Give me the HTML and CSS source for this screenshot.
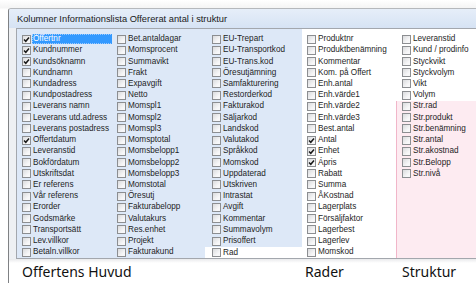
FILE: index.html
```html
<!DOCTYPE html>
<html lang="sv">
<head>
<meta charset="utf-8">
<title>Kolumner Informationslista</title>
<link rel="stylesheet" href="styles.css">
</head>
<body>
<div class="window">
  <div class="titlebar">Kolumner Informationslista Offererat antal i struktur</div>
  <div class="listbox">
    <div class="col huvud">
      <div class="item"><span class="cb on"><svg viewBox="0 0 7 7"><path d="M1 3.4 L2.8 5.3 L6 1.4"/></svg></span><span class="lbl sel">Offertnr</span></div>
      <div class="item"><span class="cb on"><svg viewBox="0 0 7 7"><path d="M1 3.4 L2.8 5.3 L6 1.4"/></svg></span><span class="lbl">Kundnummer</span></div>
      <div class="item"><span class="cb on"><svg viewBox="0 0 7 7"><path d="M1 3.4 L2.8 5.3 L6 1.4"/></svg></span><span class="lbl">Kundsöknamn</span></div>
      <div class="item"><span class="cb"></span><span class="lbl">Kundnamn</span></div>
      <div class="item"><span class="cb"></span><span class="lbl">Kundadress</span></div>
      <div class="item"><span class="cb"></span><span class="lbl">Kundpostadress</span></div>
      <div class="item"><span class="cb"></span><span class="lbl">Leverans namn</span></div>
      <div class="item"><span class="cb"></span><span class="lbl">Leverans utd.adress</span></div>
      <div class="item"><span class="cb"></span><span class="lbl">Leverans postadress</span></div>
      <div class="item"><span class="cb on"><svg viewBox="0 0 7 7"><path d="M1 3.4 L2.8 5.3 L6 1.4"/></svg></span><span class="lbl">Offertdatum</span></div>
      <div class="item"><span class="cb"></span><span class="lbl">Leveranstid</span></div>
      <div class="item"><span class="cb"></span><span class="lbl">Bokfördatum</span></div>
      <div class="item"><span class="cb"></span><span class="lbl">Utskriftsdat</span></div>
      <div class="item"><span class="cb"></span><span class="lbl">Er referens</span></div>
      <div class="item"><span class="cb"></span><span class="lbl">Vår referens</span></div>
      <div class="item"><span class="cb"></span><span class="lbl">Erorder</span></div>
      <div class="item"><span class="cb"></span><span class="lbl">Godsmärke</span></div>
      <div class="item"><span class="cb"></span><span class="lbl">Transportsätt</span></div>
      <div class="item"><span class="cb"></span><span class="lbl">Lev.villkor</span></div>
      <div class="item"><span class="cb"></span><span class="lbl">Betaln.villkor</span></div>
    </div>
    <div class="col huvud">
      <div class="item"><span class="cb"></span><span class="lbl">Bet.antaldagar</span></div>
      <div class="item"><span class="cb"></span><span class="lbl">Momsprocent</span></div>
      <div class="item"><span class="cb"></span><span class="lbl">Summavikt</span></div>
      <div class="item"><span class="cb"></span><span class="lbl">Frakt</span></div>
      <div class="item"><span class="cb"></span><span class="lbl">Expavgift</span></div>
      <div class="item"><span class="cb"></span><span class="lbl">Netto</span></div>
      <div class="item"><span class="cb"></span><span class="lbl">Momspl1</span></div>
      <div class="item"><span class="cb"></span><span class="lbl">Momspl2</span></div>
      <div class="item"><span class="cb"></span><span class="lbl">Momspl3</span></div>
      <div class="item"><span class="cb"></span><span class="lbl">Momsptotal</span></div>
      <div class="item"><span class="cb"></span><span class="lbl">Momsbelopp1</span></div>
      <div class="item"><span class="cb"></span><span class="lbl">Momsbelopp2</span></div>
      <div class="item"><span class="cb"></span><span class="lbl">Momsbelopp3</span></div>
      <div class="item"><span class="cb"></span><span class="lbl">Momstotal</span></div>
      <div class="item"><span class="cb"></span><span class="lbl">Öresutj</span></div>
      <div class="item"><span class="cb"></span><span class="lbl">Fakturabelopp</span></div>
      <div class="item"><span class="cb"></span><span class="lbl">Valutakurs</span></div>
      <div class="item"><span class="cb"></span><span class="lbl">Res.enhet</span></div>
      <div class="item"><span class="cb"></span><span class="lbl">Projekt</span></div>
      <div class="item"><span class="cb"></span><span class="lbl">Fakturakund</span></div>
    </div>
    <div class="col huvud">
      <div class="item"><span class="cb"></span><span class="lbl">EU-Trepart</span></div>
      <div class="item"><span class="cb"></span><span class="lbl">EU-Transportkod</span></div>
      <div class="item"><span class="cb"></span><span class="lbl">EU-Trans.kod</span></div>
      <div class="item"><span class="cb"></span><span class="lbl">Öresutjämning</span></div>
      <div class="item"><span class="cb"></span><span class="lbl">Samfakturering</span></div>
      <div class="item"><span class="cb"></span><span class="lbl">Restorderkod</span></div>
      <div class="item"><span class="cb"></span><span class="lbl">Fakturakod</span></div>
      <div class="item"><span class="cb"></span><span class="lbl">Säljarkod</span></div>
      <div class="item"><span class="cb"></span><span class="lbl">Landskod</span></div>
      <div class="item"><span class="cb"></span><span class="lbl">Valutakod</span></div>
      <div class="item"><span class="cb"></span><span class="lbl">Språkkod</span></div>
      <div class="item"><span class="cb"></span><span class="lbl">Momskod</span></div>
      <div class="item"><span class="cb"></span><span class="lbl">Uppdaterad</span></div>
      <div class="item"><span class="cb"></span><span class="lbl">Utskriven</span></div>
      <div class="item"><span class="cb"></span><span class="lbl">Intrastat</span></div>
      <div class="item"><span class="cb"></span><span class="lbl">Avgift</span></div>
      <div class="item"><span class="cb"></span><span class="lbl">Kommentar</span></div>
      <div class="item"><span class="cb"></span><span class="lbl">Summavolym</span></div>
      <div class="item"><span class="cb"></span><span class="lbl">Prisoffert</span></div>
      <div class="item plain"><span class="cb"></span><span class="lbl">Rad</span></div>
    </div>
    <div class="col">
      <div class="item"><span class="cb"></span><span class="lbl">Produktnr</span></div>
      <div class="item"><span class="cb"></span><span class="lbl">Produktbenämning</span></div>
      <div class="item"><span class="cb"></span><span class="lbl">Kommentar</span></div>
      <div class="item"><span class="cb"></span><span class="lbl">Kom. på Offert</span></div>
      <div class="item"><span class="cb"></span><span class="lbl">Enh.antal</span></div>
      <div class="item"><span class="cb"></span><span class="lbl">Enh.värde1</span></div>
      <div class="item"><span class="cb"></span><span class="lbl">Enh.värde2</span></div>
      <div class="item"><span class="cb"></span><span class="lbl">Enh.värde3</span></div>
      <div class="item"><span class="cb"></span><span class="lbl">Best.antal</span></div>
      <div class="item"><span class="cb on"><svg viewBox="0 0 7 7"><path d="M1 3.4 L2.8 5.3 L6 1.4"/></svg></span><span class="lbl">Antal</span></div>
      <div class="item"><span class="cb on"><svg viewBox="0 0 7 7"><path d="M1 3.4 L2.8 5.3 L6 1.4"/></svg></span><span class="lbl">Enhet</span></div>
      <div class="item"><span class="cb on"><svg viewBox="0 0 7 7"><path d="M1 3.4 L2.8 5.3 L6 1.4"/></svg></span><span class="lbl">Ápris</span></div>
      <div class="item"><span class="cb"></span><span class="lbl">Rabatt</span></div>
      <div class="item"><span class="cb"></span><span class="lbl">Summa</span></div>
      <div class="item"><span class="cb"></span><span class="lbl">ÅKostnad</span></div>
      <div class="item"><span class="cb"></span><span class="lbl">Lagerplats</span></div>
      <div class="item"><span class="cb"></span><span class="lbl">Försäljfaktor</span></div>
      <div class="item"><span class="cb"></span><span class="lbl">Lagerbest</span></div>
      <div class="item"><span class="cb"></span><span class="lbl">Lagerlev</span></div>
      <div class="item"><span class="cb"></span><span class="lbl">Momskod</span></div>
    </div>
    <div class="col last">
      <div class="item"><span class="cb"></span><span class="lbl">Leveranstid</span></div>
      <div class="item"><span class="cb"></span><span class="lbl">Kund / prodinfo</span></div>
      <div class="item"><span class="cb"></span><span class="lbl">Styckvikt</span></div>
      <div class="item"><span class="cb"></span><span class="lbl">Styckvolym</span></div>
      <div class="item"><span class="cb"></span><span class="lbl">Vikt</span></div>
      <div class="item"><span class="cb"></span><span class="lbl">Volym</span></div>
      <div class="struktur">
        <div class="item"><span class="cb"></span><span class="lbl">Str.rad</span></div>
        <div class="item"><span class="cb"></span><span class="lbl">Str.produkt</span></div>
        <div class="item"><span class="cb"></span><span class="lbl">Str.benämning</span></div>
        <div class="item"><span class="cb"></span><span class="lbl">Str.antal</span></div>
        <div class="item"><span class="cb"></span><span class="lbl">Str.akostnad</span></div>
        <div class="item"><span class="cb"></span><span class="lbl">Str.Belopp</span></div>
        <div class="item"><span class="cb"></span><span class="lbl">Str.nivå</span></div>
      </div>
    </div>
  </div>
  <div class="labels">
    <div class="grp grp-huvud">Offertens Huvud</div>
    <div class="grp grp-rader">Rader</div>
    <div class="grp grp-struktur">Struktur</div>
  </div>
</div>
</body>
</html>
```

FILE: styles.css
```css
html, body {
  margin: 0;
  padding: 0;
}

body {
  width: 476px;
  height: 283px;
  overflow: hidden;
  background: linear-gradient(#ffffff, #f4f4f4 8px, #ffffff 9px);
  font-family: "Liberation Sans", Arial, sans-serif;
  color: #1e1e1e;
}

.window {
  margin: 8px 0 0 8px;
  width: 467px;
  height: 275px;
  overflow: hidden;
  border-left: 1px solid #7f8184;
  border-top: 1px solid #b5b8bc;
  border-top-left-radius: 3px;
  background: #eef0f3;
  display: flex;
  flex-direction: column;
}

.titlebar {
  height: 19px;
  flex: none;
  box-sizing: border-box;
  padding: 4px 0 0 8px;
  font-size: 9.3px;
  line-height: 12px;
  color: #1a1a1a;
  background: linear-gradient(#e6eef9, #d6e3f4);
  white-space: nowrap;
}

.listbox {
  margin-left: 7px;
  border-top: 1px solid #a3a7ad;
  border-left: 1px solid #a3a7ad;
  border-bottom: 1px solid #a3a7ad;
  background: #ffffff;
  display: flex;
  flex: none;
  height: 231px;
  box-sizing: border-box;
}

.col {
  width: 95px;
  flex: none;
  padding-top: 4.5px;
  display: flex;
  flex-direction: column;
}

.col.last {
  flex: 1;
}

.col.huvud {
  background: #dde8f7;
}

.item {
  height: 11.23px;
  flex: none;
  display: flex;
  align-items: center;
  font-size: 8.2px;
  white-space: nowrap;
}

.item.plain {
  background: #ffffff;
  margin-left: -2px;
  padding-left: 2px;
  flex: 1;
  align-items: flex-start;
  padding-top: 1px;
}

.cb {
  width: 9px;
  height: 9px;
  box-sizing: border-box;
  margin-left: 5px;
  border: 1px solid #8c8e91;
  background: linear-gradient(135deg, #dadbdd, #f7f7f8 70%);
  flex: none;
  display: flex;
}

.cb svg {
  width: 7px;
  height: 7px;
}

.cb svg path {
  fill: none;
  stroke: #1a1a1a;
  stroke-width: 1.5;
}

.lbl {
  margin-left: 1px;
  padding-left: 1px;
  line-height: 10px;
  height: 10px;
}

.lbl.sel {
  flex: 1;
  margin-right: -3px;
  background: #3399ff;
  color: #ffffff;
  outline: 1px dotted #9ccaff;
  outline-offset: -1px;
}

.struktur {
  flex: 1;
  background: #fdebf1;
  border-left: 1px solid #f1b6c9;
  margin-left: -1px;
}

.labels {
  flex: 1;
  display: flex;
  background: linear-gradient(#e9eaec, #ffffff 4px);
  padding-top: 3px;
  font-family: "Noto Sans", "Open Sans", sans-serif;
  font-size: 14px;
  line-height: 20px;
  color: #111111;
}

.grp-huvud {
  width: 283px;
  padding-left: 13px;
}

.grp-rader {
  width: 97px;
}
```
